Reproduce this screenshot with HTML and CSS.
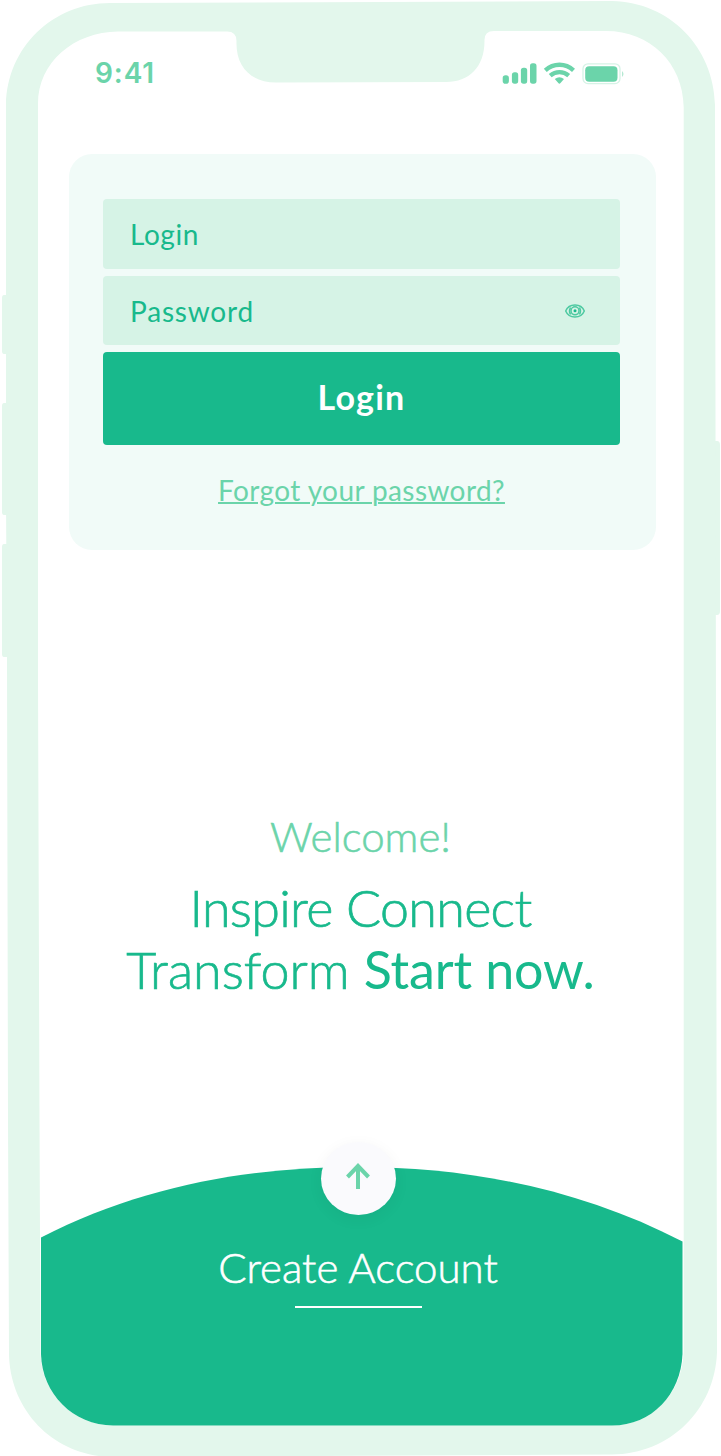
FILE: index.html
```html
<!DOCTYPE html>
<html lang="en">
<head>
<meta charset="utf-8">
<title>Login</title>
<link rel="stylesheet" href="styles.css">
</head>
<body>
<div class="phone">
  <svg class="phone-frame" viewBox="0 0 721 1456" aria-hidden="true">
    <path class="frame-fill" d="M10 295H4Q2 295 2 298V351Q2 354 4 354H10ZM10 403H4Q2 403 2 406V512Q2 515 4 515H10ZM10 544H4Q2 544 2 547V654Q2 657 4 657H10ZM712 441H717Q720 441 720 445V611Q720 615 717 615H712Z"/>
    <path class="frame-fill" fill-rule="evenodd" d="M6 105C7 47 53 3 110 3L612 1C670 2 714 48 715 105L717 1352C715 1410 670 1454 612 1454.500L112 1457C54 1456 10 1411 9 1354L8 1120L7 657L6 500Z
      M38 104C38 62 74 32 118 31.500H227Q236.500 31.500 236.500 41C235.500 67 251 82.500 276 82.500L446 82C469 82 484.500 67 484.500 41Q484 31 494 31H606C650 31 683 63 683.700 107V1352C682 1394 652 1425.500 612 1425.500H113C73 1425 42 1394 40.500 1354L39.500 1120L38 680Z"/>
  </svg>

  <header class="status-bar">
    <span class="clock">9:41</span>
    <svg class="status-icons" width="124" height="24" viewBox="501 61 124 24" aria-hidden="true">
      <rect x="502.700" y="75.300" width="6.200" height="8.400" rx="2.800"/>
      <rect x="511.900" y="72.300" width="6.300" height="11.400" rx="2.600"/>
      <rect x="520.900" y="67.800" width="6.300" height="15.900" rx="2.600"/>
      <rect x="530" y="63.300" width="6.500" height="20.400" rx="2.600"/>
      <path class="wifi-arc" d="M545.300 70.300C553.500 63 565.500 63 573.500 70.300M550.200 75.600C555.700 71 563.300 71 568.700 75.600"/>
      <path d="M554.800 79Q559.400 75.500 564 79L560.500 83Q559.400 84.500 558.300 83Z"/>
      <rect class="battery-shell" x="583" y="63.800" width="37" height="19.800" rx="5"/>
      <rect x="585.200" y="66.300" width="32.300" height="15.400" rx="4"/>
      <path class="battery-tip" d="M622 71Q625 74 622 77Z"/>
    </svg>
  </header>

  <main class="content">
    <form class="login-card">
      <div class="field"><span class="login-label">Login</span></div>
      <div class="field">
        <span class="password-label">Password</span>
        <svg class="eye" width="20" height="14" viewBox="0 0 20 14" aria-hidden="true">
          <path d="M.7 7C4 -1 16 -1 19.300 7C16 15 4 15 .7 7Z"/>
          <path d="M5.500 3.500Q3.500 7 5.500 10.500M14.500 3.500Q16.500 7 14.500 10.500"/>
          <circle cx="10" cy="6.800" r="4"/>
          <circle class="pupil" cx="10" cy="6.800" r="1.500"/>
        </svg>
      </div>
      <button class="submit" type="button"><span>Login</span></button>
      <a class="forgot">Forgot your password?</a>
    </form>

    <section class="intro">
      <p class="welcome">Welcome!</p>
      <h1 class="slogan"><span class="line-one">Inspire Connect</span><span class="line-two"><span class="transform">Transform</span><span class="start">Start now.</span></span></h1>
    </section>
  </main>

  <footer class="signup">
    <svg class="wave" viewBox="41 1142 642 284" aria-hidden="true">
      <path d="M41 1237.500C143 1185 251 1167 358 1167C469 1167 581 1189 682.500 1241.500V1354C681 1394 652 1425.500 612 1425.500H113C73 1425 42 1394 41 1354Z"/>
    </svg>
    <div class="up-button">
      <svg width="26" height="28" viewBox="0 0 26 28" aria-hidden="true"><path d="M13 26V3M2.500 14L13 3L23.500 14"/></svg>
    </div>
    <span class="create">Create Account</span>
    <span class="create-line"></span>
  </footer>
</div>
</body>
</html>
```
FILE: styles.css
```css
* { box-sizing: border-box; }
body { margin: 0; background: #fff; font-family: Lato, sans-serif; color: #18b98c; }
.phone { position: relative; width: 721px; height: 1456px; overflow: hidden; display: flex; flex-direction: column; }
.phone-frame { position: absolute; inset: 0; width: 721px; height: 1456px; }
.frame-fill { fill: #e3f7ec; }

.status-bar { position: relative; height: 154px; padding: 61px 96px 0 95px; display: flex; justify-content: space-between; align-items: flex-start; color: #6bd4aa; }
.clock { font: 600 28px/24px Inter, sans-serif; letter-spacing: .9px; }
.status-icons { fill: #6bd4aa; }
.status-icons .wifi-arc { fill: none; stroke: #6bd4aa; stroke-width: 4.4; }
.status-icons .battery-shell { fill: none; stroke: #d6f3e6; stroke-width: 1.3; }
.status-icons .battery-tip { fill: #b5e9d3; }

.content { position: relative; height: 988px; }
.login-card { margin: 0 65px 0 69px; width: 587px; height: 396px; padding: 45px 36px 0 34px; border-radius: 23px; background: #f1fbf8; display: flex; flex-direction: column; align-items: stretch; }
.field { height: 70px; margin-bottom: 7px; padding: 0 35px 0 27px; border-radius: 4px; background: #d6f3e6; display: flex; align-items: center; justify-content: space-between; font-size: 28px; line-height: 68px; }
.field + .field { height: 69px; }
.login-label { letter-spacing: .6px; }
.password-label { letter-spacing: .8px; }
.eye { fill: none; stroke: #4dc9a1; stroke-width: 1.5; }
.eye .pupil { fill: #18b98c; stroke: none; }
.submit { height: 93px; border: 0; padding: 0 0 4px; border-radius: 4px; background: #18b98c; color: #fff; font: 700 34px/89px Lato, sans-serif; letter-spacing: 1.2px; text-align: center; }
.forgot { align-self: center; margin-top: 28px; font-size: 28px; line-height: 34px; letter-spacing: .4px; color: #6bd4aa; text-decoration: underline; text-decoration-thickness: 2px; text-underline-offset: 1px; white-space: nowrap; }

.intro { margin-top: 261px; display: flex; flex-direction: column; align-items: center; font-weight: 300; }
.welcome { margin: 0; font-size: 42px; line-height: 50px; color: #6bd4aa; -webkit-text-stroke: .6px currentColor; }
.slogan { margin: 15px 0 0; font-size: 52px; font-weight: 300; line-height: 62px; display: flex; flex-direction: column; align-items: center; white-space: nowrap; }
.line-one { letter-spacing: -.7px; -webkit-text-stroke: .7px currentColor; }
.line-two { display: flex; gap: 14px; }
.transform { -webkit-text-stroke: .7px currentColor; }
.start { font-weight: 400; letter-spacing: -.15px; }

.signup { position: relative; width: 642px; height: 284px; margin-left: 41px; display: flex; flex-direction: column; align-items: center; padding-right: 8px; color: #fff; }
.wave { position: absolute; inset: 0; width: 642px; height: 284px; fill: #18b98c; }
.up-button { position: relative; width: 75px; height: 73px; border-radius: 50%; background: #fafafd; box-shadow: 0 4px 16px rgba(0, 0, 0, .05); display: flex; align-items: center; justify-content: center; padding-bottom: 3px; }
.up-button svg { fill: none; stroke: #6bd4aa; stroke-width: 4; }
.create { position: relative; margin-top: 27px; font-size: 42px; font-weight: 300; line-height: 50px; white-space: nowrap; -webkit-text-stroke: .6px currentColor; }
.create-line { position: relative; width: 127px; height: 2px; margin-top: 14px; background: #fff; }
```
